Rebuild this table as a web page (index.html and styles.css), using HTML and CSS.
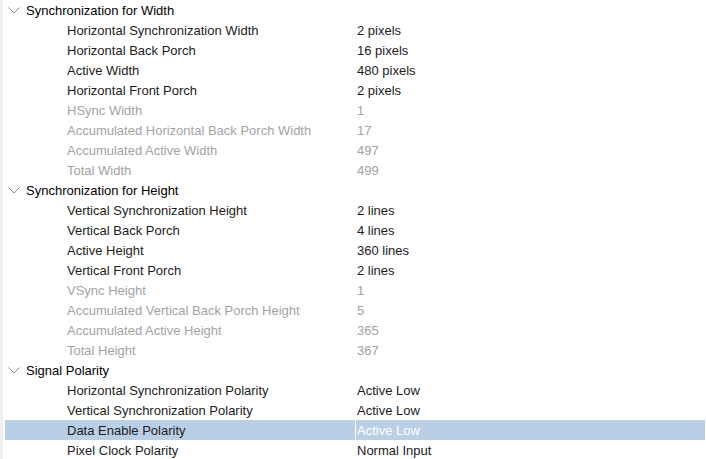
FILE: index.html
```html
<!DOCTYPE html>
<html>
<head>
<meta charset="utf-8">
<link rel="stylesheet" href="styles.css">
</head>
<body>
<div class="tree">
  <div class="row group"><span class="name"><svg class="chev" width="12" height="7" viewBox="0 0 12 7"><path d="M0.5 0.5 L6 6 L11.5 0.5" fill="none" stroke="#8a8a8a" stroke-width="1"/></svg>Synchronization for Width</span><span class="val"></span></div>
  <div class="row"><span class="name child">Horizontal Synchronization Width</span><span class="val">2 pixels</span></div>
  <div class="row"><span class="name child">Horizontal Back Porch</span><span class="val">16 pixels</span></div>
  <div class="row"><span class="name child">Active Width</span><span class="val">480 pixels</span></div>
  <div class="row"><span class="name child">Horizontal Front Porch</span><span class="val">2 pixels</span></div>
  <div class="row dim"><span class="name child">HSync Width</span><span class="val">1</span></div>
  <div class="row dim"><span class="name child">Accumulated Horizontal Back Porch Width</span><span class="val">17</span></div>
  <div class="row dim"><span class="name child">Accumulated Active Width</span><span class="val">497</span></div>
  <div class="row dim"><span class="name child">Total Width</span><span class="val">499</span></div>
  <div class="row group"><span class="name"><svg class="chev" width="12" height="7" viewBox="0 0 12 7"><path d="M0.5 0.5 L6 6 L11.5 0.5" fill="none" stroke="#8a8a8a" stroke-width="1"/></svg>Synchronization for Height</span><span class="val"></span></div>
  <div class="row"><span class="name child">Vertical Synchronization Height</span><span class="val">2 lines</span></div>
  <div class="row"><span class="name child">Vertical Back Porch</span><span class="val">4 lines</span></div>
  <div class="row"><span class="name child">Active Height</span><span class="val">360 lines</span></div>
  <div class="row"><span class="name child">Vertical Front Porch</span><span class="val">2 lines</span></div>
  <div class="row dim"><span class="name child">VSync Height</span><span class="val">1</span></div>
  <div class="row dim"><span class="name child">Accumulated Vertical Back Porch Height</span><span class="val">5</span></div>
  <div class="row dim"><span class="name child">Accumulated Active Height</span><span class="val">365</span></div>
  <div class="row dim"><span class="name child">Total Height</span><span class="val">367</span></div>
  <div class="row group"><span class="name"><svg class="chev" width="12" height="7" viewBox="0 0 12 7"><path d="M0.5 0.5 L6 6 L11.5 0.5" fill="none" stroke="#8a8a8a" stroke-width="1"/></svg>Signal Polarity</span><span class="val"></span></div>
  <div class="row"><span class="name child">Horizontal Synchronization Polarity</span><span class="val">Active Low</span></div>
  <div class="row"><span class="name child">Vertical Synchronization Polarity</span><span class="val">Active Low</span></div>
  <div class="row selected"><span class="name child">Data Enable Polarity</span><span class="val">Active Low</span></div>
  <div class="row"><span class="name child">Pixel Clock Polarity</span><span class="val">Normal Input</span></div>
</div>
</body>
</html>
```
FILE: styles.css
```css
html, body {
  margin: 0;
  padding: 0;
  background: #ffffff;
}
body {
  width: 706px;
  height: 459px;
  overflow: hidden;
  font-family: "Liberation Sans", Arial, sans-serif;
  font-size: 13px;
  color: #1c1c1c;
}
.tree {
  border-left: 3px solid #f0f0f0;
  padding-left: 2px;
  padding-right: 1px;
  height: 459px;
  box-sizing: border-box;
}
.row {
  display: grid;
  grid-template-columns: 350px 1fr;
  column-gap: 1px;
  height: 20px;
  line-height: 20px;
  white-space: nowrap;
}
.name {
  display: flex;
  align-items: center;
  overflow: hidden;
  padding-top: 1px;
  height: 20px;
  box-sizing: border-box;
}
.val {
  padding-left: 1px;
  padding-top: 1px;
  height: 20px;
  box-sizing: border-box;
}
.group .name {
  padding-left: 3px;
  color: #000;
}
.chev {
  margin-right: 6px;
  margin-top: 0px;
}
.child {
  padding-left: 62px;
}
.dim {
  color: #a3a3a3;
}
.selected .name,
.selected .val {
  background: #b9cfe5;
}
.selected .val {
  color: #ffffff;
}
```
